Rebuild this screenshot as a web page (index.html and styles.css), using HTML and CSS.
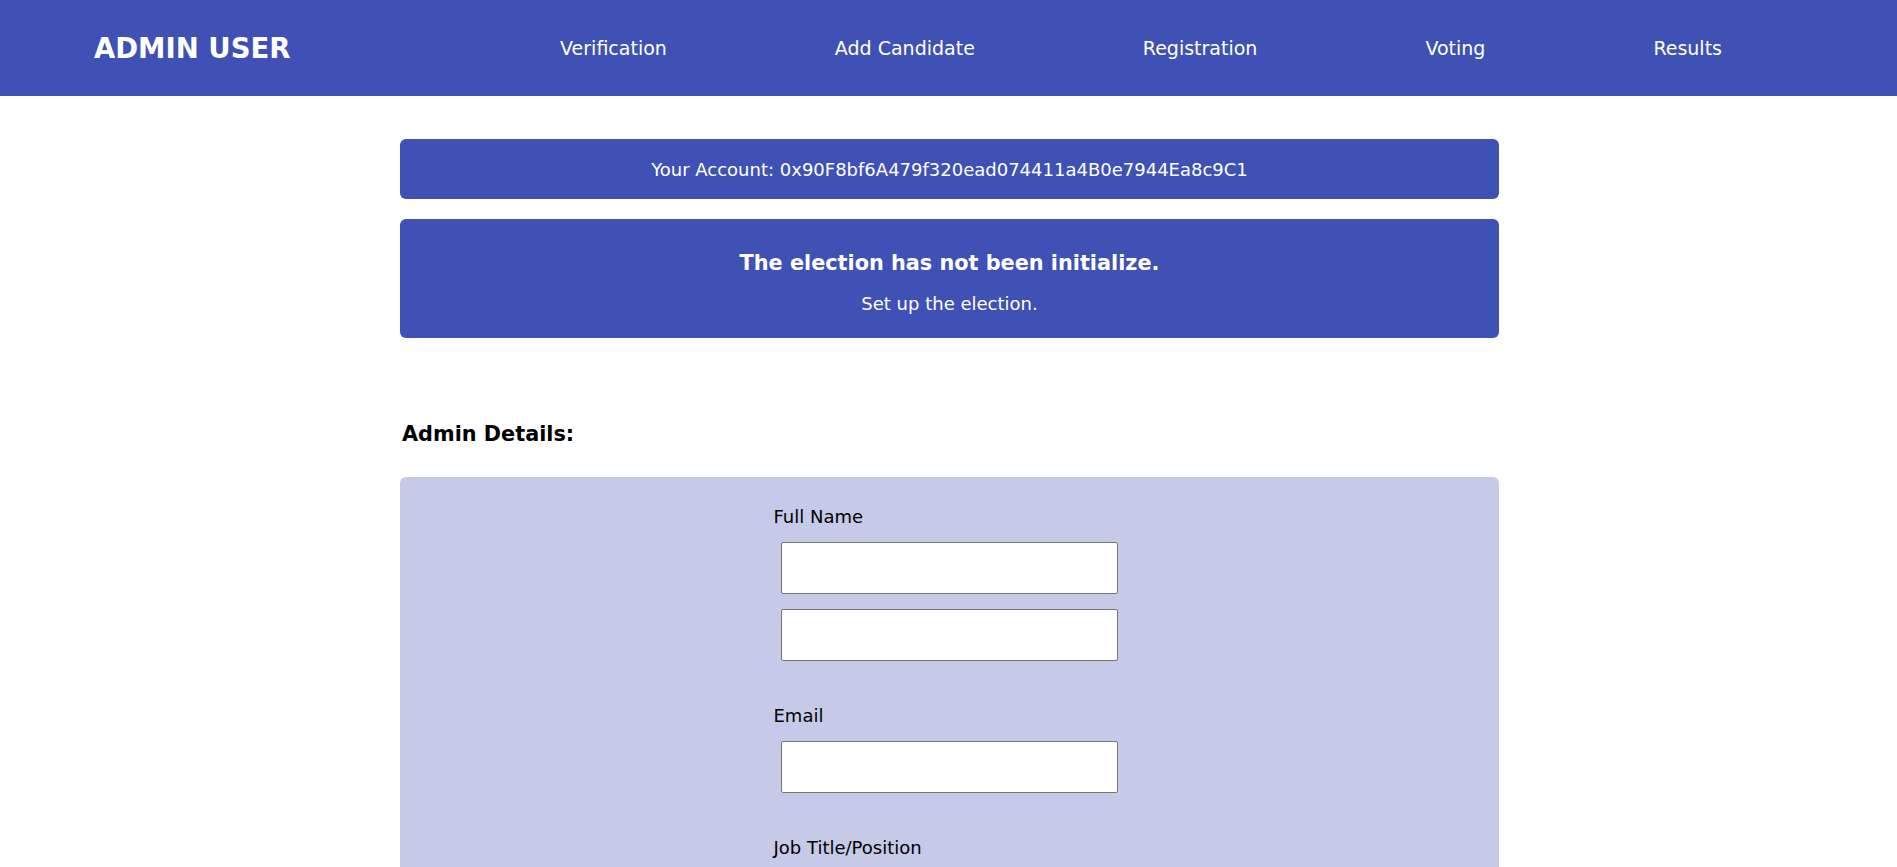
FILE: index.html
```html
<!DOCTYPE html>
<html lang="en">
<head>
<meta charset="utf-8">
<title>Admin</title>
<link rel="stylesheet" href="styles.css">
</head>
<body>
<header class="navbar">
  <div class="brand">ADMIN USER</div>
  <nav class="nav">
    <a class="nav-link" href="#">Verification</a>
    <a class="nav-link" href="#">Add Candidate</a>
    <a class="nav-link" href="#">Registration</a>
    <a class="nav-link" href="#">Voting</a>
    <a class="nav-link" href="#">Results</a>
  </nav>
</header>
<main class="container">
  <div class="account">Your Account: 0x90F8bf6A479f320ead074411a4B0e7944Ea8c9C1</div>
  <div class="notice">
    <h3 class="notice-title">The election has not been initialize.</h3>
    <p class="notice-text">Set up the election.</p>
  </div>
  <h3 class="section-title">Admin Details:</h3>
  <form class="form-box">
    <div class="form-col">
      <div class="field">
        <label class="field-label">Full Name</label>
        <input class="input" type="text">
        <input class="input" type="text">
      </div>
      <div class="field">
        <label class="field-label">Email</label>
        <input class="input" type="email">
      </div>
      <div class="field">
        <label class="field-label">Job Title/Position</label>
        <input class="input" type="text">
      </div>
    </div>
  </form>
</main>
</body>
</html>
```
FILE: styles.css
```css
body {
  margin: 0;
  font-family: "DejaVu Sans", Verdana, sans-serif;
  font-size: 18px;
  color: #000;
  background: #fff;
}

.navbar {
  height: 96px;
  background: #3f51b5;
  display: flex;
  align-items: center;
  justify-content: space-between;
  padding: 0 91px 0 94px;
}

.brand {
  color: #fff;
  font-weight: bold;
  font-size: 27.5px;
}

.nav {
  display: flex;
}

.nav-link {
  color: #fff;
  text-decoration: none;
  font-size: 19px;
  padding: 0 84px;
}

.container {
  width: 1099px;
  margin: 0 auto;
  padding-left: 2px;
}

.account {
  margin-top: 43px;
  height: 60px;
  border-radius: 6px;
  background: #3f51b5;
  color: #fff;
  display: flex;
  align-items: center;
  justify-content: center;
}

.notice {
  margin-top: 20px;
  height: 119px;
  box-sizing: border-box;
  border-radius: 6px;
  background: #3f51b5;
  color: #fff;
  text-align: center;
  padding-top: 32px;
}

.notice-title {
  margin: 0;
  font-size: 20.8px;
  line-height: 24px;
}

.notice-text {
  margin: 18px 0 0;
  line-height: 22px;
}

.section-title {
  margin: 84px 0 0 2px;
  font-size: 20.8px;
  line-height: 25px;
}

.form-box {
  margin-top: 30px;
  background: #c5cae9;
  border-radius: 6px;
  padding: 29px 0 60px;
}

.form-col {
  width: 352px;
  margin: 0 auto;
  display: flex;
  flex-direction: column;
  gap: 29px;
}

.field {
  display: flex;
  flex-direction: column;
}

.field-label {
  line-height: 22px;
  margin-bottom: 14px;
}

.input {
  box-sizing: border-box;
  width: 337px;
  height: 52px;
  margin: 0 0 15px 7px;
  border: 1px solid #767676;
  border-radius: 2px;
  background: #fff;
  padding: 0 8px;
  font: inherit;
}
```
